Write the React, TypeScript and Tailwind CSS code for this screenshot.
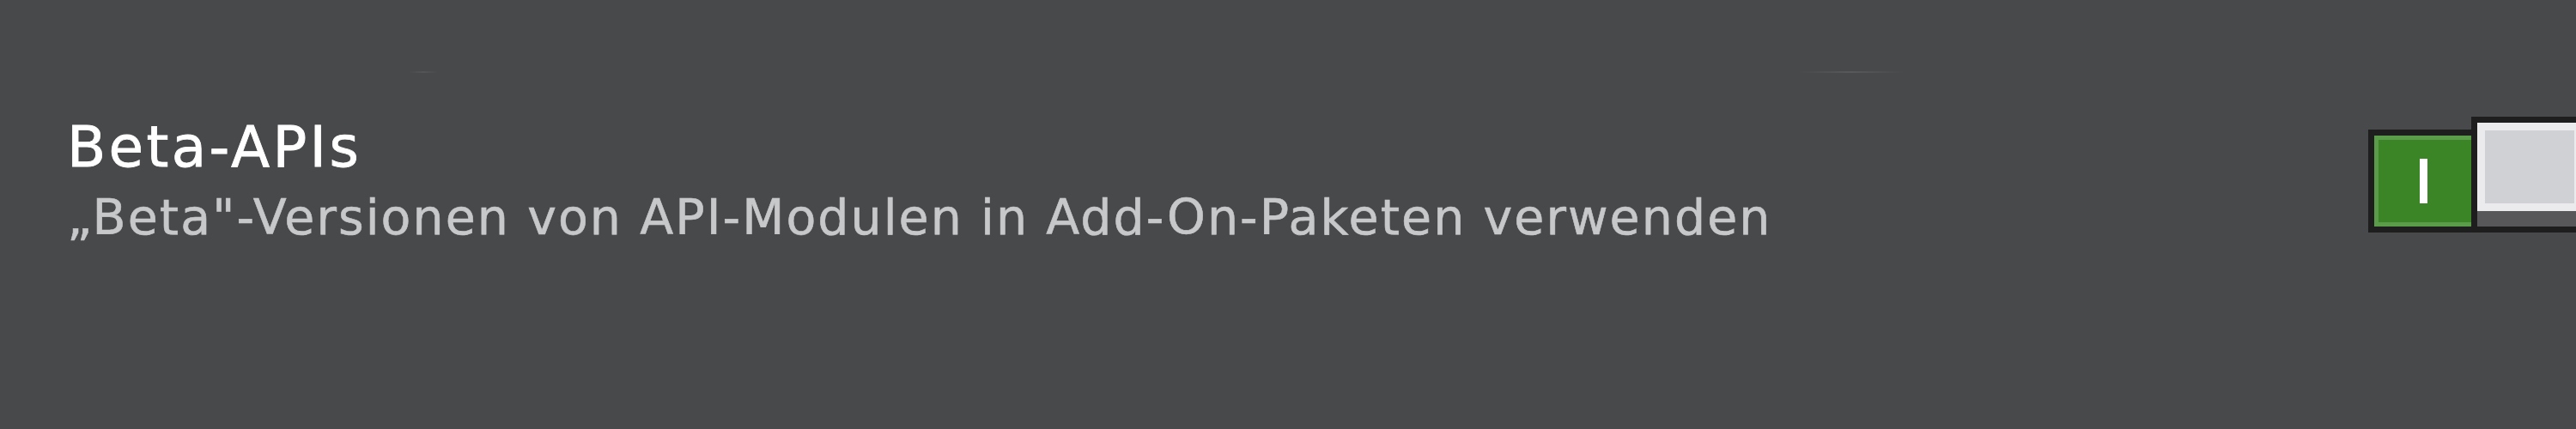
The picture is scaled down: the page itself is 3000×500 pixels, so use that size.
import React from "react";

function Toggle() {
  return (
    <div className="-mr-[14px] flex shrink-0 items-end">
      {/* track, green "on" state */}
      <div className="h-[120px] w-[121px] border-[7px] border-r-0 border-[#1e1e1f]">
        <div className="flex h-full w-full items-center justify-center bg-[#3c8527] shadow-[inset_5px_5px_0_#5a9c49,inset_0_-5px_0_#5a9c49]">
          <span className="block h-[52px] w-[9px] bg-white" />
        </div>
      </div>
      {/* knob sits raised over the track */}
      <div className="-ml-px h-[135px] w-[136px] border-[7px] border-[#1e1e1f] bg-[#58585a]">
        <div className="h-[103px] border-[9px] border-[#ebebed] bg-[#d0d1d4]" />
      </div>
    </div>
  );
}

export default function App() {
  return (
    <div
      className="h-[500px] w-[3000px] overflow-hidden bg-[#48494b]"
      style={{ fontFamily: '"DejaVu Sans", "Noto Sans", sans-serif' }}
    >
      {/* faint edges left by the row above */}
      <div className="flex pt-[83px]">
        <div className="ml-[476px] h-[2px] w-[34px] bg-gradient-to-r from-transparent via-[#545557] to-transparent" />
        <div className="ml-[1585px] h-[2px] w-[122px] bg-gradient-to-r from-transparent via-[#58595b] to-transparent" />
      </div>

      <div className="flex items-start pl-[78px] pt-[50px]">
        <div className="min-w-0 flex-1 pt-[4px]">
          <div className="text-[66px] leading-none tracking-[3.3px] text-white [-webkit-text-stroke:0.8px_white]">
            Beta-APIs
          </div>
          <div className="mt-[20px] text-[57px] leading-none tracking-[2.05px] text-[#c7c8ca] [-webkit-text-stroke:0.6px_#c7c8ca]">
            „Beta"-Versionen von API-Modulen in Add-On-Paketen verwenden
          </div>
        </div>
        <div className="pt-px">
          <Toggle />
        </div>
      </div>
    </div>
  );
}
